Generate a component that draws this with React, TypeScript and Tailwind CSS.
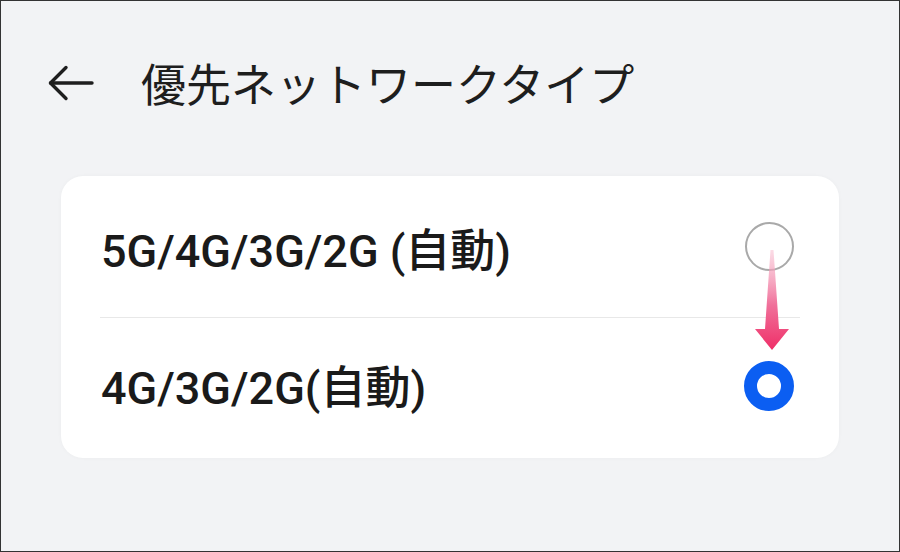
const font = { fontFamily: '"Roboto", "Noto Sans CJK JP", sans-serif' };

function BackArrow() {
  return (
    <svg width="46" height="36" viewBox="0 0 46 36" fill="none" aria-hidden="true">
      <path d="M2.5 18H44" stroke="#1e1e1e" strokeWidth="3.4" strokeLinecap="round" />
      <path d="M18 2.5L2.5 18L18 33.5" stroke="#1e1e1e" strokeWidth="3.4" strokeLinecap="round" strokeLinejoin="round" />
    </svg>
  );
}

function PinkArrow() {
  return (
    <svg
      className="absolute left-[690px] top-[70px]"
      width="50"
      height="110"
      viewBox="0 0 50 110"
      aria-hidden="true"
    >
      <defs>
        <linearGradient id="pk" x1="0" y1="0" x2="0" y2="1">
          <stop offset="0" stopColor="#f7b8cc" stopOpacity="0.5" />
          <stop offset="0.55" stopColor="#f0709a" />
          <stop offset="1" stopColor="#ef2f68" />
        </linearGradient>
      </defs>
      <path d="M19.5 4 L22.5 4 L28 83 L38 83 L21 104 L4 83 L14 83 Z" fill="url(#pk)" />
    </svg>
  );
}

export default function App() {
  return (
    <div className="w-[900px] h-[552px] bg-[#f2f3f5] border border-[#333] flex flex-col" style={font}>
      <header className="flex items-center h-[58px] mt-[53px] pl-[47px]">
        <BackArrow />
        <h1
          className="ml-[47px] text-[45px] leading-[58px] font-normal text-[#1e1e1e]"
          style={{ fontFamily: '"Noto Sans CJK JP", sans-serif' }}
        >
          優先ネットワークタイプ
        </h1>
      </header>

      <div className="relative mx-[60px] mt-[64px] bg-white rounded-[22px] shadow-[0_0_4px_rgba(0,0,0,0.03)]">
        <div className="flex items-center justify-between h-[141px] pl-[40px] pr-[45px]">
          <span className="pt-[10px] text-[45px] leading-none font-medium text-[#1a1a1a]">
            5G/4G/3G/2G (自動)
          </span>
          <span className="w-[49px] h-[49px] rounded-full border-[2.5px] border-[#a9a9a9]" />
        </div>
        <div className="mx-[39px] h-px bg-[#e8e8e8]" />
        <div className="flex items-center justify-between h-[140px] pl-[40px] pr-[45px]">
          <span className="text-[45px] leading-none font-medium text-[#1a1a1a]">
            4G/3G/2G(自動)
          </span>
          <span className="mb-[4px] w-[50px] h-[50px] rounded-full border-[13px] border-[#0b5ef2] bg-white" />
        </div>
        <PinkArrow />
      </div>
    </div>
  );
}
